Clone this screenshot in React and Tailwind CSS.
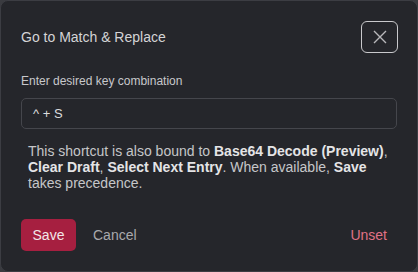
import React from 'react';

const App = () => {
  return (
    <div className="w-[418px] h-[272px] bg-[#3a3b40]" style={{ fontFamily: '"Liberation Sans", Arial, sans-serif' }}>
      <div className="w-full h-full rounded-lg border border-[#3c3d43] bg-[#25262b] flex flex-col">
        <div className="flex items-center justify-between pl-[20px] pr-[19px] pt-[20px]">
          <h2 className="text-[14px] text-[#d4d4d6]">Go to Match &amp; Replace</h2>
          <button className="w-[37px] h-[32px] rounded-md border border-[#c9c9cc] flex items-center justify-center text-[#b8b8bb]">
            <svg width="14" height="14" viewBox="0 0 14 14" fill="none" stroke="currentColor" strokeWidth="1.4">
              <path d="M1 1L13 13M13 1L1 13" />
            </svg>
          </button>
        </div>

        <div className="px-[20px] mt-[20px]">
          <label className="block text-[12px] text-[#c8c8cb] leading-[16px]">Enter desired key combination</label>
          <div className="mt-[9px] h-[31px] rounded-[5px] border border-[#45464c] flex items-center px-[11px] text-[13px] text-[#dcdcde]">
            ^ + S
          </div>
          <p className="mt-[14px] px-[7px] text-[14px] leading-[16px] text-[#c6c6c9]">
            This shortcut is also bound to <b className="text-[#e4e4e6]">Base64 Decode (Preview)</b>,{' '}
            <b className="text-[#e4e4e6]">Clear Draft</b>, <b className="text-[#e4e4e6]">Select Next Entry</b>. When available,{' '}
            <b className="text-[#e4e4e6]">Save</b> takes precedence.
          </p>
        </div>

        <div className="flex items-center px-[20px] mt-[28px]">
          <button className="h-[32px] w-[55px] rounded-[5px] bg-[#a61f40] text-[14px] text-[#f2e6e9]">Save</button>
          <button className="ml-[17px] text-[14px] text-[#a9a9ad]">Cancel</button>
          <button className="ml-auto mr-[10px] text-[14px] text-[#e07286]">Unset</button>
        </div>
      </div>
    </div>
  );
};

export default App;
